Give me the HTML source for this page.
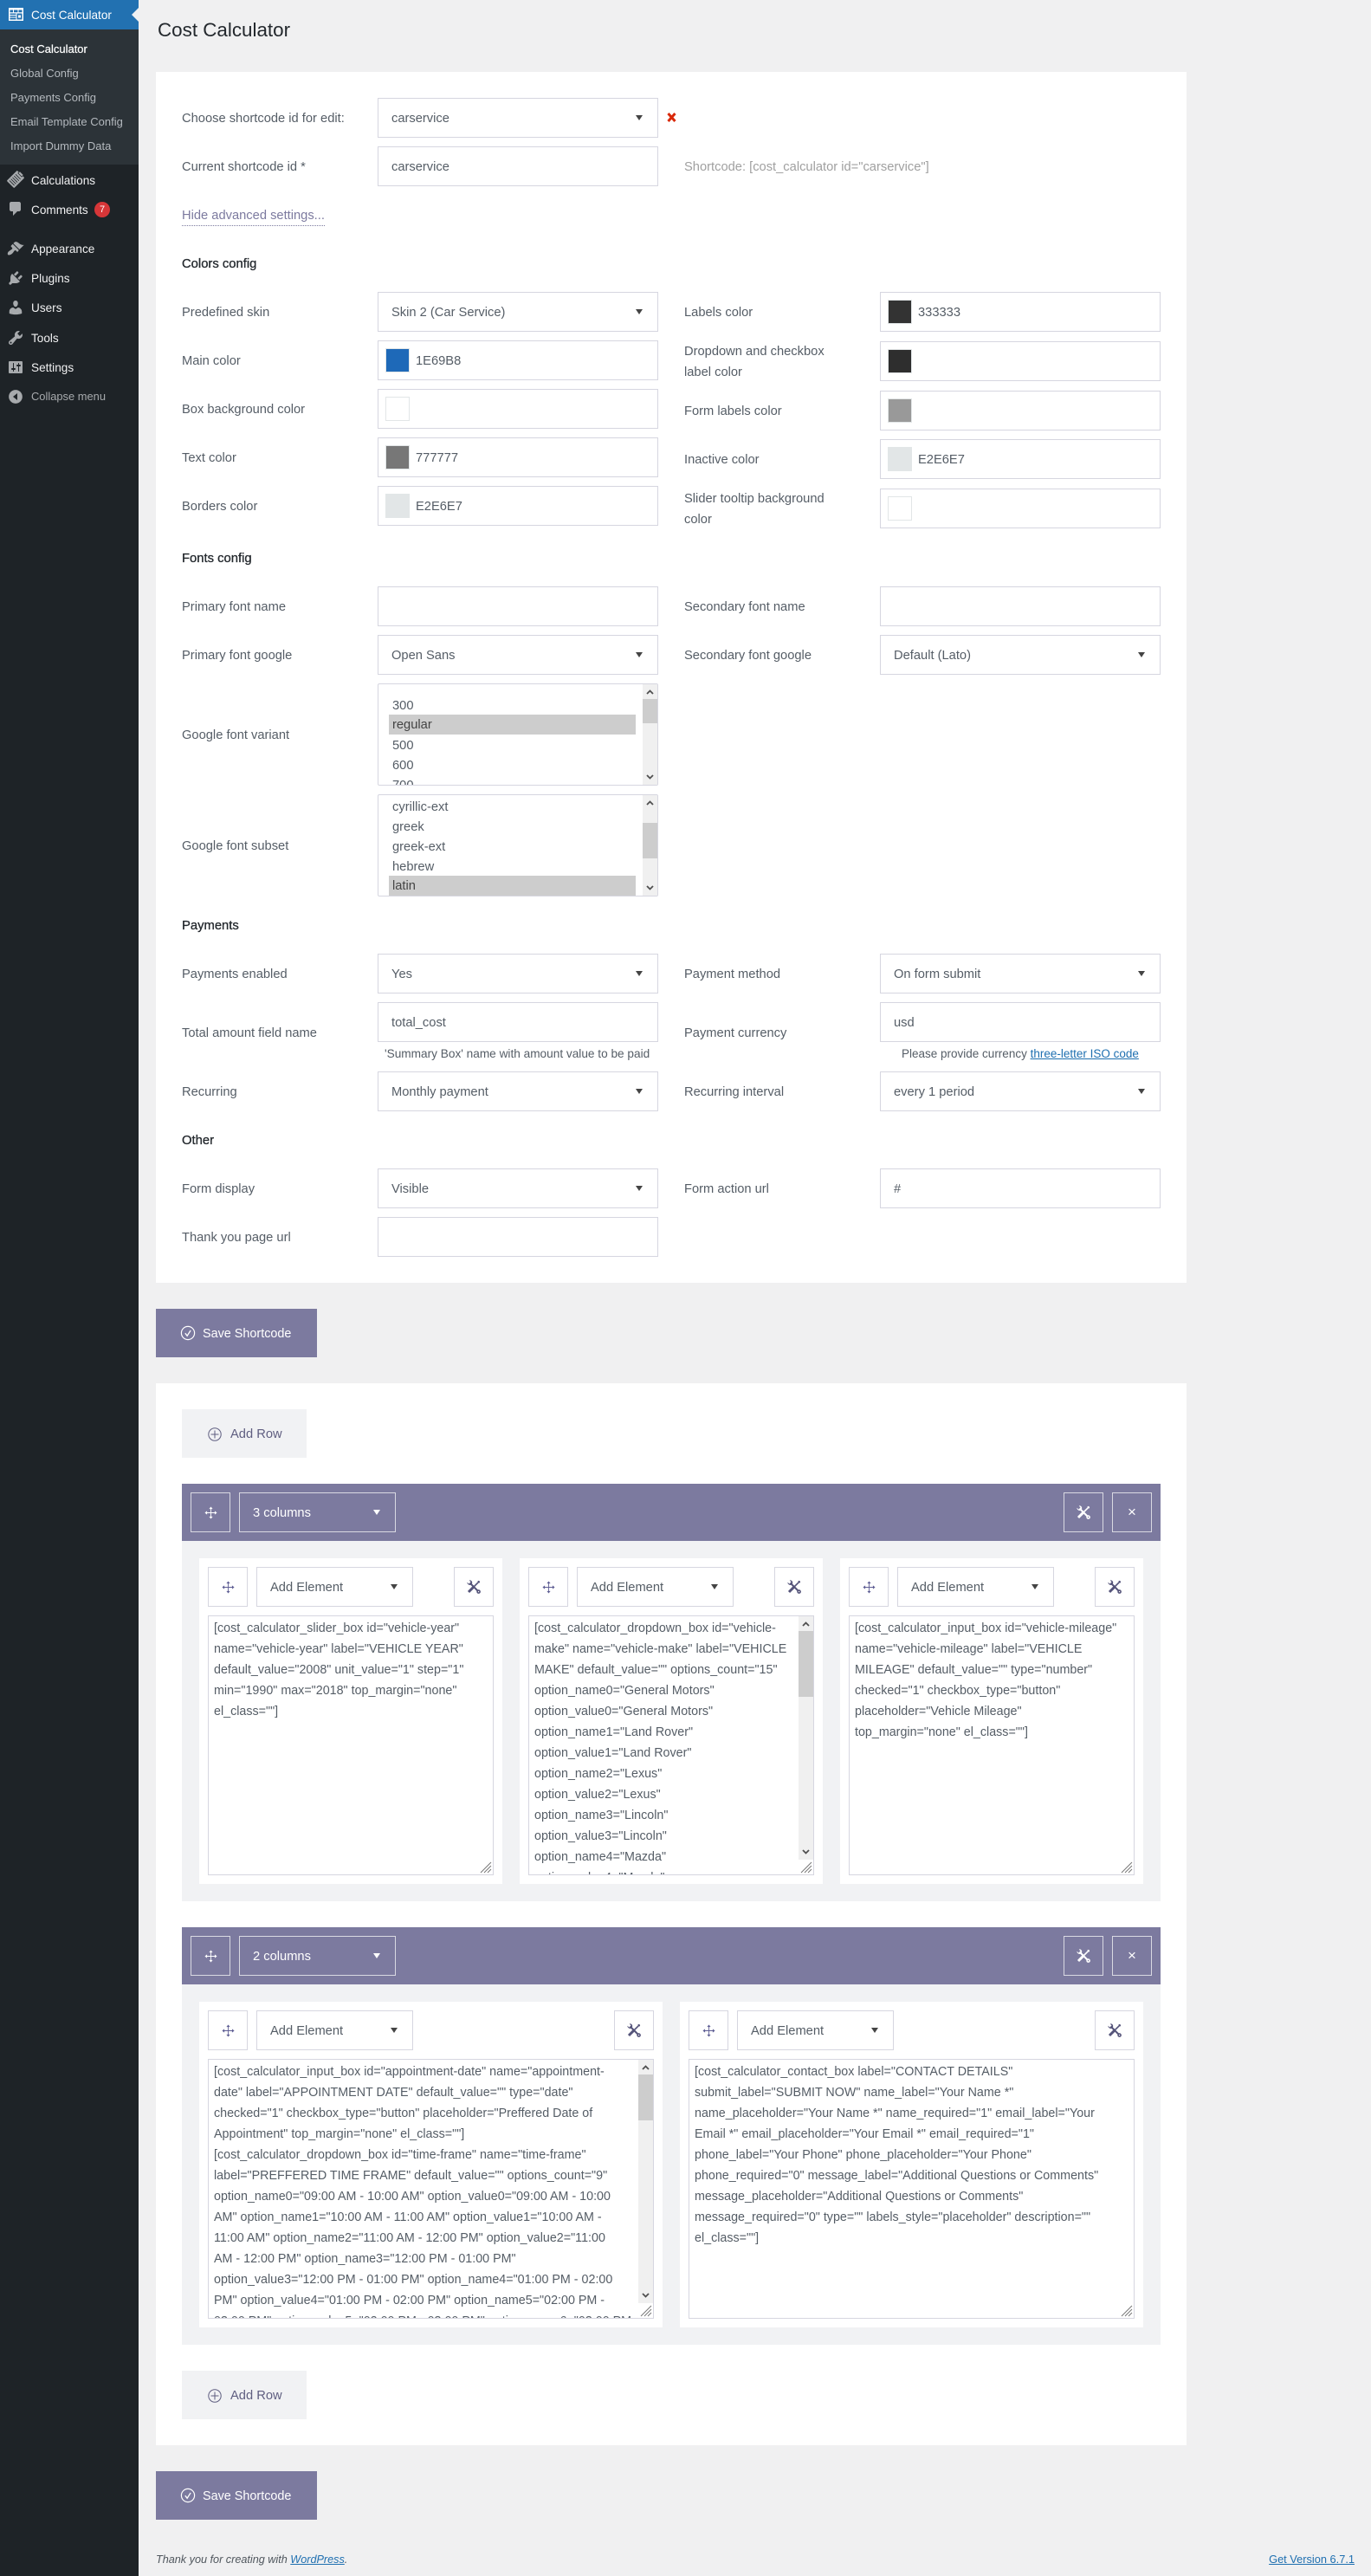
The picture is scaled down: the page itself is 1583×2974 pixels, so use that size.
<!DOCTYPE html>
<html lang="en">
<head>
<meta charset="utf-8">
<title>Cost Calculator</title>
<style>
html,body{margin:0;padding:0;width:1583px;height:2974px;overflow:hidden;background:#f0f0f1}
body{position:relative;font-family:"Liberation Sans",sans-serif;font-size:14.7px;color:#555d66}
a{color:#1e6fb0}
div,span,svg{box-sizing:border-box}
.a,.t,.h,.b,.s{position:absolute}
.t{line-height:20px;white-space:nowrap;margin-top:1px}
.l{left:210px}.r{left:790px}
.h{left:210px;line-height:20px;color:#23282d;font-size:14.8px;-webkit-text-stroke:.3px #23282d;white-space:nowrap;margin-top:1px}
.b{background:#fff;border:1px solid #d6d6e0;height:46px;line-height:46px;padding-left:15px;white-space:nowrap;color:#555d66}
.i1{left:436px;width:324px}
.i2{left:1016px;width:324px}
.s::after,.ar::after{content:"";position:absolute;right:17px;top:19px;border-left:4.5px solid transparent;border-right:4.5px solid transparent;border-top:6px solid #444}
.hb.ar::after{border-top-color:#fff}
.sw{position:absolute;top:8px;width:28px;height:28px;border:1px solid #e2e6e7}
.i1 .sw{left:8px}.i2 .sw{left:8px}
.v{position:absolute;top:0;left:43px}
.sb{position:absolute;top:0;right:0;width:17px;background:#f0f0f0}
.th{position:absolute;left:0;width:17px;background:#cdcdcd}
.ch{position:absolute;left:4px;width:9px;height:6px}
.lb{position:absolute;left:436px;width:324px;height:118px;background:#fff;border:1px solid #d6d6e0;border-radius:2px;overflow:hidden}
.o{position:absolute;left:12px;width:285px;height:23px;line-height:25px;padding-left:4px;color:#555d66}
.o.sel{background:#cdcdcd;color:#444}
.ta{position:absolute;background:#fff;border:1px solid #d6d6e0;overflow:hidden;padding:2px 0 0 6px;line-height:24px;white-space:nowrap;color:#555d66;font-size:14.3px}
.gr{position:absolute;right:1px;bottom:1px;width:14px;height:14px}
.btn{position:absolute;background:#fff;border:1px solid #d6d6e0;width:46px;height:46px}
.btn svg{position:absolute;left:15px;top:15px}
.sel2{position:absolute;background:#fff;border:1px solid #d6d6e0;width:181px;height:46px;line-height:46px;padding-left:15px;color:#555d66}
.hd{position:absolute;left:210px;width:1130px;height:66px;background:#7c7a9f}
.hb{position:absolute;top:10px;height:46px;border:1px solid #d9d9e2;color:#fff}
.save{position:absolute;left:180px;width:186px;height:56px;background:#7c7a9f;color:#fff;line-height:58px;padding-left:54px;white-space:nowrap;font-size:14.4px}
.add{position:absolute;left:210px;width:144px;height:56px;background:#f1f2f4;color:#5f5e80;line-height:58px;padding-left:56px;white-space:nowrap}
.m{position:absolute;left:36px;line-height:20px;color:#f0f0f1;font-size:13.6px;white-space:nowrap}
.sm{position:absolute;left:12px;line-height:20px;color:#b4b9be;font-size:13px;white-space:nowrap;margin-top:1px}
.ic{position:absolute;left:8px;width:20px;height:20px;fill:#a7aaad}
</style>
</head>
<body>
<svg width="0" height="0" style="position:absolute">
<defs>
<symbol id="mv" viewBox="0 0 17 17"><path d="M8.500 1.500v14M1.500 8.500h14" fill="none" stroke="currentColor" stroke-width="1"/><path d="M8.500 .5l2.400 3H6.100zM8.500 16.500l2.400-3H6.100zM.5 8.500l3-2.400v4.800zM16.500 8.500l-3-2.400v4.800z" fill="currentColor"/></symbol>
<symbol id="tl" viewBox="0 0 16 16"><path d="M14.600 1.400L8 8" fill="none" stroke="currentColor" stroke-width="1.600"/><path d="M8.300 7.700L2 14" fill="none" stroke="currentColor" stroke-width="3"/><path d="M13.200.8L15.200 2.800 14.200 3.600 12.400 1.800z" fill="currentColor"/><path d="M3.500 3.500L12.500 12.500" fill="none" stroke="currentColor" stroke-width="2"/><path d="M.5 2.800L2.500 4.600 4.600 2.600 2.800.5C4.600 0 6.300 1.400 6.200 3.300 6.100 5.200 4.200 6.500 2.400 5.700 1.100 5.100.2 4 .5 2.800z" fill="currentColor"/><path fill-rule="evenodd" d="M13.600 11.300a2.300 2.300 0 1 1 0 4.600 2.300 2.300 0 0 1 0-4.600zM13.600 12.900a.7.7 0 1 0 0 1.400.7.7 0 0 0 0-1.400z" fill="currentColor"/></symbol>
<symbol id="gp" viewBox="0 0 14 14"><path d="M1 13L13 1M5 13L13 5M9 13L13 9" fill="none" stroke="#777" stroke-width="1"/></symbol>
<symbol id="up" viewBox="0 0 9 6"><path d="M1 5l3.500-3.500L8 5" fill="none" stroke="#505050" stroke-width="1.800"/></symbol>
<symbol id="dn" viewBox="0 0 9 6"><path d="M1 1l3.500 3.500L8 1" fill="none" stroke="#505050" stroke-width="1.800"/></symbol>
<symbol id="ck" viewBox="0 0 18 18"><circle cx="9" cy="9" r="7.600" fill="none" stroke="#fff" stroke-width="1.200"/><path d="M5.800 9.200l2.300 3 4-6.200" fill="none" stroke="#fff" stroke-width="1.300"/></symbol>
<symbol id="pl" viewBox="0 0 16 16"><circle cx="8" cy="8" r="7.200" fill="none" stroke="#5f5e80" stroke-width="1"/><path d="M8 3.500v9M3.500 8h9" fill="none" stroke="#5f5e80" stroke-width="1"/></symbol>
</defs>
</svg>

<!-- sidebar -->
<div class="a" style="left:0;top:0;width:160px;height:2974px;background:#1e2327"></div>
<div class="a" style="left:0;top:34px;width:160px;height:156px;background:#2c3338"></div>
<div class="a" style="left:0;top:0;width:160px;height:34px;background:#2271b1"></div>
<div class="a" style="left:152px;top:9px;width:0;height:0;border-top:8px solid transparent;border-bottom:8px solid transparent;border-right:8px solid #f0f0f1"></div>
<svg class="a" style="left:10px;top:9px" width="17" height="15" viewBox="0 0 17 15"><path fill="#fff" fill-rule="evenodd" d="M0 0h17v15H0zM1.500 2.500v2.800h3.500V2.500zM6 2.500v2.800h4.500V2.500zM11.500 2.500v2.800h4V2.500zM1.500 6.500v1.500h7V6.500zM1.500 9v1.500h7V9zM1.500 11.500v2h7v-2zM9.500 6.500v7h6v-7zM11 8.500h3v3h-3z"/></svg>
<div class="m" style="top:8px;color:#fff">Cost Calculator</div>
<div class="sm" style="top:46px;color:#fff;-webkit-text-stroke:.2px #fff">Cost Calculator</div>
<div class="sm" style="top:74px">Global Config</div>
<div class="sm" style="top:102px">Payments Config</div>
<div class="sm" style="top:130px">Email Template Config</div>
<div class="sm" style="top:158px">Import Dummy Data</div>

<svg class="ic" style="top:197px" viewBox="0 0 20 20"><g transform="rotate(45 10 10)"><rect x="4" y="1.500" width="12" height="17" rx="1"/><rect x="7" y="0" width="6" height="3" fill="#a7aaad" stroke="#1e2327" stroke-width=".7"/><path d="M6 6h8M6 8.500h8M6 11h8M6 13.500h8M6 16h8" stroke="#1e2327" stroke-width=".8" fill="none"/></g></svg>
<div class="m" style="top:199px">Calculations</div>
<svg class="ic" style="top:231px" viewBox="0 0 20 20"><path d="M5 2h9c1.100 0 2 .9 2 2v7c0 1.100-.9 2-2 2h-2l-5 5v-5H5c-1.100 0-2-.9-2-2V4c0-1.100.9-2 2-2z"/></svg>
<div class="m" style="top:233px">Comments</div>
<div class="a" style="left:109px;top:233px;width:18px;height:18px;border-radius:50%;background:#d63638;color:#fff;font-size:11px;line-height:18px;text-align:center">7</div>
<svg class="ic" style="top:277px" viewBox="0 0 20 20"><path d="M14.480 11.060L7.410 3.990l1.500-1.500c.5-.56 2.300-.47 3.510.32 1.210.8 1.430 1.280 2.910 2.100 1.180.64 2.450 1.260 4.450.85zm-.71.71L6.700 4.700 4.930 6.470c-.39.39-.39 1.020 0 1.410l1.060 1.060c.39.39.39 1.030 0 1.420-.6.6-1.430 1.110-2.210 1.690-.35.26-.7.53-1.010.84C1.430 13.230.1 15.980 1.200 17.100c1.100 1.100 3.850-.23 5.160-1.570.31-.31.58-.66.85-1.020.57-.78 1.080-1.610 1.690-2.210.39-.39 1.020-.39 1.410 0l1.060 1.060c.39.39 1.020.39 1.410 0z"/></svg>
<div class="m" style="top:278px">Appearance</div>
<svg class="ic" style="top:311px" viewBox="0 0 20 20"><path d="M13.110 4.360L9.870 7.600 8 5.730l3.240-3.240c.35-.34 1.050-.2 1.560.32.520.51.660 1.210.31 1.550zm-8 1.770l.91-1.120 9.010 9.010-1.190.84c-.71.71-2.630 1.160-3.820 1.160H6.140L4.900 17.260c-.59.59-1.540.59-2.120 0-.59-.58-.59-1.530 0-2.120l1.240-1.240v-3.880c0-1.130.4-3.190 1.090-3.890zm7.260 3.970l3.240-3.240c.34-.35 1.040-.21 1.550.31.520.51.660 1.210.31 1.550l-3.240 3.250z"/></svg>
<div class="m" style="top:312px">Plugins</div>
<svg class="ic" style="top:345px" viewBox="0 0 20 20"><path d="M10 9.250c-2.270 0-2.730-3.440-2.730-3.440C7 4.020 7.820 2 9.970 2c2.160 0 2.980 2.020 2.710 3.810 0 0-.41 3.440-2.680 3.440zm0 2.570L12.720 10c2.390 0 4.520 2.330 4.520 4.530v2.490s-3.650 1.130-7.240 1.130c-3.650 0-7.240-1.130-7.240-1.130v-2.490c0-2.250 1.940-4.480 4.470-4.480z"/></svg>
<div class="m" style="top:346px">Users</div>
<svg class="ic" style="top:380px" viewBox="0 0 20 20"><path d="M16.680 9.770c-1.340 1.340-3.300 1.670-4.950.99l-5.410 6.520c-.99.99-2.590.99-3.580 0s-.99-2.590 0-3.570l6.520-5.420c-.68-1.650-.35-3.610.99-4.950 1.280-1.280 3.120-1.620 4.720-1.060l-2.890 2.890 2.820 2.820 2.860-2.870c.53 1.580.18 3.390-1.080 4.650zM3.810 16.210c.4.39 1.040.39 1.430 0 .4-.4.4-1.040 0-1.430-.39-.4-1.030-.4-1.430 0-.39.39-.39 1.030 0 1.430z"/></svg>
<div class="m" style="top:381px">Tools</div>
<svg class="ic" style="top:414px" viewBox="0 0 20 20"><path d="M18 16V4c0-.55-.45-1-1-1H3c-.55 0-1 .45-1 1v12c0 .55.45 1 1 1h14c.55 0 1-.45 1-1zM8 11h1c.55 0 1 .45 1 1s-.45 1-1 1H8v1.500c0 .28-.22.5-.5.5s-.5-.22-.5-.5V13H6c-.55 0-1-.45-1-1s.45-1 1-1h1V5.500c0-.28.22-.5.5-.5s.5.22.5.5V11zm5-2h-1c-.55 0-1-.45-1-1s.45-1 1-1h1V5.500c0-.28.22-.5.5-.5s.5.22.5.5V7h1c.55 0 1 .45 1 1s-.45 1-1 1h-1v5.500c0 .28-.22.5-.5.5s-.5-.22-.5-.5V9z"/></svg>
<div class="m" style="top:415px">Settings</div>
<svg class="ic" style="top:448px" viewBox="0 0 20 20"><path fill-rule="evenodd" d="M10 2.160c4.330 0 7.840 3.510 7.840 7.840s-3.510 7.840-7.840 7.840S2.160 14.330 2.160 10C2.170 5.670 5.670 2.160 10 2.160zM12 14V6l-5 4z"/></svg>
<div class="m" style="top:448px;color:#a7aaad;font-size:12.900px">Collapse menu</div>

<!-- title -->
<div class="a" style="left:182px;top:20px;font-size:22.400px;line-height:30px;color:#23282d;white-space:nowrap">Cost Calculator</div>

<!-- panel 1 -->
<div class="a" style="left:180px;top:83px;width:1190px;height:1398px;background:#fff"></div>

<div class="t l" style="top:126px">Choose shortcode id for edit:</div>
<div class="b s i1" style="top:113px">carservice</div>
<svg class="a" style="left:770px;top:130px" width="11" height="11" viewBox="0 0 11 11"><path d="M1.500 1L9.500 10M9.500 1L1.500 10" stroke="#d9290a" stroke-width="3" fill="none"/></svg>
<div class="t l" style="top:182px">Current shortcode id *</div>
<div class="b i1" style="top:169px">carservice</div>
<div class="t r" style="top:182px;color:#a0a0a0">Shortcode: [cost_calculator id="carservice"]</div>
<div class="t l" style="top:238px;color:#7c7a9f;border-bottom:1px dotted #7c7a9f;height:22px">Hide advanced settings...</div>

<div class="h" style="top:294px">Colors config</div>
<div class="t l" style="top:350px">Predefined skin</div>
<div class="b s i1" style="top:337px">Skin 2 (Car Service)</div>
<div class="t r" style="top:350px">Labels color</div>
<div class="b i2" style="top:337px"><span class="sw" style="background:#333"></span><span class="v">333333</span></div>
<div class="t l" style="top:406px">Main color</div>
<div class="b i1" style="top:393px"><span class="sw" style="background:#1e69b8"></span><span class="v">1E69B8</span></div>
<div class="t r" style="top:395px">Dropdown and checkbox</div>
<div class="t r" style="top:419px">label color</div>
<div class="b i2" style="top:394px"><span class="sw" style="background:#2e2e2e"></span></div>
<div class="t l" style="top:462px">Box background color</div>
<div class="b i1" style="top:449px"><span class="sw" style="background:#fff"></span></div>
<div class="t r" style="top:464px">Form labels color</div>
<div class="b i2" style="top:451px"><span class="sw" style="background:#999"></span></div>
<div class="t l" style="top:518px">Text color</div>
<div class="b i1" style="top:505px"><span class="sw" style="background:#777"></span><span class="v">777777</span></div>
<div class="t r" style="top:520px">Inactive color</div>
<div class="b i2" style="top:507px"><span class="sw" style="background:#e2e6e7"></span><span class="v">E2E6E7</span></div>
<div class="t l" style="top:574px">Borders color</div>
<div class="b i1" style="top:561px"><span class="sw" style="background:#e2e6e7"></span><span class="v">E2E6E7</span></div>
<div class="t r" style="top:565px">Slider tooltip background</div>
<div class="t r" style="top:589px">color</div>
<div class="b i2" style="top:564px"><span class="sw" style="background:#fff"></span></div>

<div class="h" style="top:634px">Fonts config</div>
<div class="t l" style="top:690px">Primary font name</div>
<div class="b i1" style="top:677px"></div>
<div class="t r" style="top:690px">Secondary font name</div>
<div class="b i2" style="top:677px"></div>
<div class="t l" style="top:746px">Primary font google</div>
<div class="b s i1" style="top:733px">Open Sans</div>
<div class="t r" style="top:746px">Secondary font google</div>
<div class="b s i2" style="top:733px">Default (Lato)</div>

<div class="t l" style="top:838px">Google font variant</div>
<div class="lb" style="top:789px;height:118px">
  <div class="o" style="top:13px">300</div>
  <div class="o sel" style="top:35px">regular</div>
  <div class="o" style="top:59px">500</div>
  <div class="o" style="top:82px">600</div>
  <div class="o" style="top:105px">700</div>
  <div class="sb" style="height:116px"><div class="th" style="top:17px;height:28px"></div><svg class="ch" style="top:6px"><use href="#up"/></svg><svg class="ch" style="top:104px"><use href="#dn"/></svg></div>
</div>
<div class="t l" style="top:966px">Google font subset</div>
<div class="lb" style="top:917px;height:118px">
  <div class="o" style="top:2px">cyrillic-ext</div>
  <div class="o" style="top:25px">greek</div>
  <div class="o" style="top:48px">greek-ext</div>
  <div class="o" style="top:71px">hebrew</div>
  <div class="o sel" style="top:93px">latin</div>
  <div class="sb" style="height:116px"><div class="th" style="top:32px;height:41px"></div><svg class="ch" style="top:6px"><use href="#up"/></svg><svg class="ch" style="top:104px"><use href="#dn"/></svg></div>
</div>

<div class="h" style="top:1058px">Payments</div>
<div class="t l" style="top:1114px">Payments enabled</div>
<div class="b s i1" style="top:1101px">Yes</div>
<div class="t r" style="top:1114px">Payment method</div>
<div class="b s i2" style="top:1101px">On form submit</div>
<div class="t l" style="top:1182px">Total amount field name</div>
<div class="b i1" style="top:1157px">total_cost</div>
<div class="t r" style="top:1182px">Payment currency</div>
<div class="b i2" style="top:1157px">usd</div>
<div class="t" style="left:444px;top:1206px;font-size:13.650px;color:#555d66">'Summary Box' name with amount value to be paid</div>
<div class="t" style="left:1041px;top:1206px;font-size:13.500px;color:#555d66">Please provide currency <a href="#">three-letter ISO code</a></div>
<div class="t l" style="top:1250px">Recurring</div>
<div class="b s i1" style="top:1237px">Monthly payment</div>
<div class="t r" style="top:1250px">Recurring interval</div>
<div class="b s i2" style="top:1237px">every 1 period</div>

<div class="h" style="top:1306px">Other</div>
<div class="t l" style="top:1362px">Form display</div>
<div class="b s i1" style="top:1349px">Visible</div>
<div class="t r" style="top:1362px">Form action url</div>
<div class="b i2" style="top:1349px">#</div>
<div class="t l" style="top:1418px">Thank you page url</div>
<div class="b i1" style="top:1405px"></div>

<div class="save" style="top:1511px">Save Shortcode<svg class="a" style="left:28px;top:19px" width="18" height="18"><use href="#ck"/></svg></div>

<!-- panel 2 -->
<div class="a" style="left:180px;top:1597px;width:1190px;height:1226px;background:#fff"></div>
<div class="add" style="top:1627px">Add Row<svg class="a" style="left:30px;top:21px" width="16" height="16"><use href="#pl"/></svg></div>

<!-- row 1 -->
<div class="a" style="left:210px;top:1779px;width:1130px;height:416px;background:#f1f2f4"></div>
<div class="hd" style="top:1713px">
  <div class="hb" style="left:10px;width:46px"><svg class="a" style="left:15px;top:15px;color:#fff" width="15" height="15"><use href="#mv"/></svg></div>
  <div class="hb ar" style="left:66px;width:181px;line-height:46px;padding-left:15px">3 columns</div>
  <div class="hb" style="left:1018px;width:46px"><svg class="a" style="left:14px;top:14px;color:#fff" width="16" height="16"><use href="#tl"/></svg></div>
  <div class="hb" style="left:1074px;width:46px"><span class="a" style="left:0;top:0;width:44px;text-align:center;line-height:44px;font-size:17px">×</span></div>
</div>

<div class="a" style="left:230px;top:1799px;width:350px;height:376px;background:#fff"></div>
<div class="btn" style="left:240px;top:1809px;color:#5f5e94"><svg width="15" height="15"><use href="#mv"/></svg></div>
<div class="sel2 ar" style="left:296px;top:1809px">Add Element</div>
<div class="btn" style="left:524px;top:1809px;color:#55547a"><svg width="16" height="16" style="left:14px;top:14px"><use href="#tl"/></svg></div>
<div class="ta" style="left:240px;top:1865px;width:330px;height:300px">[cost_calculator_slider_box id="vehicle-year"<br>name="vehicle-year" label="VEHICLE YEAR"<br>default_value="2008" unit_value="1" step="1"<br>min="1990" max="2018" top_margin="none"<br>el_class=""]<svg class="gr"><use href="#gp"/></svg></div>

<div class="a" style="left:600px;top:1799px;width:350px;height:376px;background:#fff"></div>
<div class="btn" style="left:610px;top:1809px;color:#5f5e94"><svg width="15" height="15"><use href="#mv"/></svg></div>
<div class="sel2 ar" style="left:666px;top:1809px">Add Element</div>
<div class="btn" style="left:894px;top:1809px;color:#55547a"><svg width="16" height="16" style="left:14px;top:14px"><use href="#tl"/></svg></div>
<div class="ta" style="left:610px;top:1865px;width:330px;height:300px">[cost_calculator_dropdown_box id="vehicle-<br>make" name="vehicle-make" label="VEHICLE<br>MAKE" default_value="" options_count="15"<br>option_name0="General Motors"<br>option_value0="General Motors"<br>option_name1="Land Rover"<br>option_value1="Land Rover"<br>option_name2="Lexus"<br>option_value2="Lexus"<br>option_name3="Lincoln"<br>option_value3="Lincoln"<br>option_name4="Mazda"<br>option_value4="Mazda"<div class="sb" style="height:281px"><div class="th" style="top:17px;height:76px"></div><svg class="ch" style="top:6px"><use href="#up"/></svg><svg class="ch" style="top:269px"><use href="#dn"/></svg></div><svg class="gr"><use href="#gp"/></svg></div>

<div class="a" style="left:970px;top:1799px;width:350px;height:376px;background:#fff"></div>
<div class="btn" style="left:980px;top:1809px;color:#5f5e94"><svg width="15" height="15"><use href="#mv"/></svg></div>
<div class="sel2 ar" style="left:1036px;top:1809px">Add Element</div>
<div class="btn" style="left:1264px;top:1809px;color:#55547a"><svg width="16" height="16" style="left:14px;top:14px"><use href="#tl"/></svg></div>
<div class="ta" style="left:980px;top:1865px;width:330px;height:300px">[cost_calculator_input_box id="vehicle-mileage"<br>name="vehicle-mileage" label="VEHICLE<br>MILEAGE" default_value="" type="number"<br>checked="1" checkbox_type="button"<br>placeholder="Vehicle Mileage"<br>top_margin="none" el_class=""]<svg class="gr"><use href="#gp"/></svg></div>

<!-- row 2 -->
<div class="a" style="left:210px;top:2291px;width:1130px;height:416px;background:#f1f2f4"></div>
<div class="hd" style="top:2225px">
  <div class="hb" style="left:10px;width:46px"><svg class="a" style="left:15px;top:15px;color:#fff" width="15" height="15"><use href="#mv"/></svg></div>
  <div class="hb ar" style="left:66px;width:181px;line-height:46px;padding-left:15px">2 columns</div>
  <div class="hb" style="left:1018px;width:46px"><svg class="a" style="left:14px;top:14px;color:#fff" width="16" height="16"><use href="#tl"/></svg></div>
  <div class="hb" style="left:1074px;width:46px"><span class="a" style="left:0;top:0;width:44px;text-align:center;line-height:44px;font-size:17px">×</span></div>
</div>

<div class="a" style="left:230px;top:2311px;width:535px;height:376px;background:#fff"></div>
<div class="btn" style="left:240px;top:2321px;color:#5f5e94"><svg width="15" height="15"><use href="#mv"/></svg></div>
<div class="sel2 ar" style="left:296px;top:2321px">Add Element</div>
<div class="btn" style="left:709px;top:2321px;color:#55547a"><svg width="16" height="16" style="left:14px;top:14px"><use href="#tl"/></svg></div>
<div class="ta" style="left:240px;top:2377px;width:515px;height:300px">[cost_calculator_input_box id="appointment-date" name="appointment-<br>date" label="APPOINTMENT DATE" default_value="" type="date"<br>checked="1" checkbox_type="button" placeholder="Preffered Date of<br>Appointment" top_margin="none" el_class=""]<br>[cost_calculator_dropdown_box id="time-frame" name="time-frame"<br>label="PREFFERED TIME FRAME" default_value="" options_count="9"<br>option_name0="09:00 AM - 10:00 AM" option_value0="09:00 AM - 10:00<br>AM" option_name1="10:00 AM - 11:00 AM" option_value1="10:00 AM -<br>11:00 AM" option_name2="11:00 AM - 12:00 PM" option_value2="11:00<br>AM - 12:00 PM" option_name3="12:00 PM - 01:00 PM"<br>option_value3="12:00 PM - 01:00 PM" option_name4="01:00 PM - 02:00<br>PM" option_value4="01:00 PM - 02:00 PM" option_name5="02:00 PM -<br>03:00 PM" option_value5="02:00 PM - 03:00 PM" option_name6="03:00 PM<div class="sb" style="height:281px"><div class="th" style="top:17px;height:53px"></div><svg class="ch" style="top:6px"><use href="#up"/></svg><svg class="ch" style="top:269px"><use href="#dn"/></svg></div><svg class="gr"><use href="#gp"/></svg></div>

<div class="a" style="left:785px;top:2311px;width:535px;height:376px;background:#fff"></div>
<div class="btn" style="left:795px;top:2321px;color:#5f5e94"><svg width="15" height="15"><use href="#mv"/></svg></div>
<div class="sel2 ar" style="left:851px;top:2321px">Add Element</div>
<div class="btn" style="left:1264px;top:2321px;color:#55547a"><svg width="16" height="16" style="left:14px;top:14px"><use href="#tl"/></svg></div>
<div class="ta" style="left:795px;top:2377px;width:515px;height:300px">[cost_calculator_contact_box label="CONTACT DETAILS"<br>submit_label="SUBMIT NOW" name_label="Your Name *"<br>name_placeholder="Your Name *" name_required="1" email_label="Your<br>Email *" email_placeholder="Your Email *" email_required="1"<br>phone_label="Your Phone" phone_placeholder="Your Phone"<br>phone_required="0" message_label="Additional Questions or Comments"<br>message_placeholder="Additional Questions or Comments"<br>message_required="0" type="" labels_style="placeholder" description=""<br>el_class=""]<svg class="gr"><use href="#gp"/></svg></div>

<div class="add" style="top:2737px">Add Row<svg class="a" style="left:30px;top:21px" width="16" height="16"><use href="#pl"/></svg></div>

<div class="save" style="top:2853px">Save Shortcode<svg class="a" style="left:28px;top:19px" width="18" height="18"><use href="#ck"/></svg></div>

<!-- footer -->
<div class="t" style="left:180px;top:2944px;font-size:12.650px;font-style:italic;color:#50575e">Thank you for creating with <a href="#">WordPress</a>.</div>
<div class="t" style="right:19px;top:2944px;font-size:12.800px"><a href="#">Get Version 6.7.1</a></div>
</body>
</html>
